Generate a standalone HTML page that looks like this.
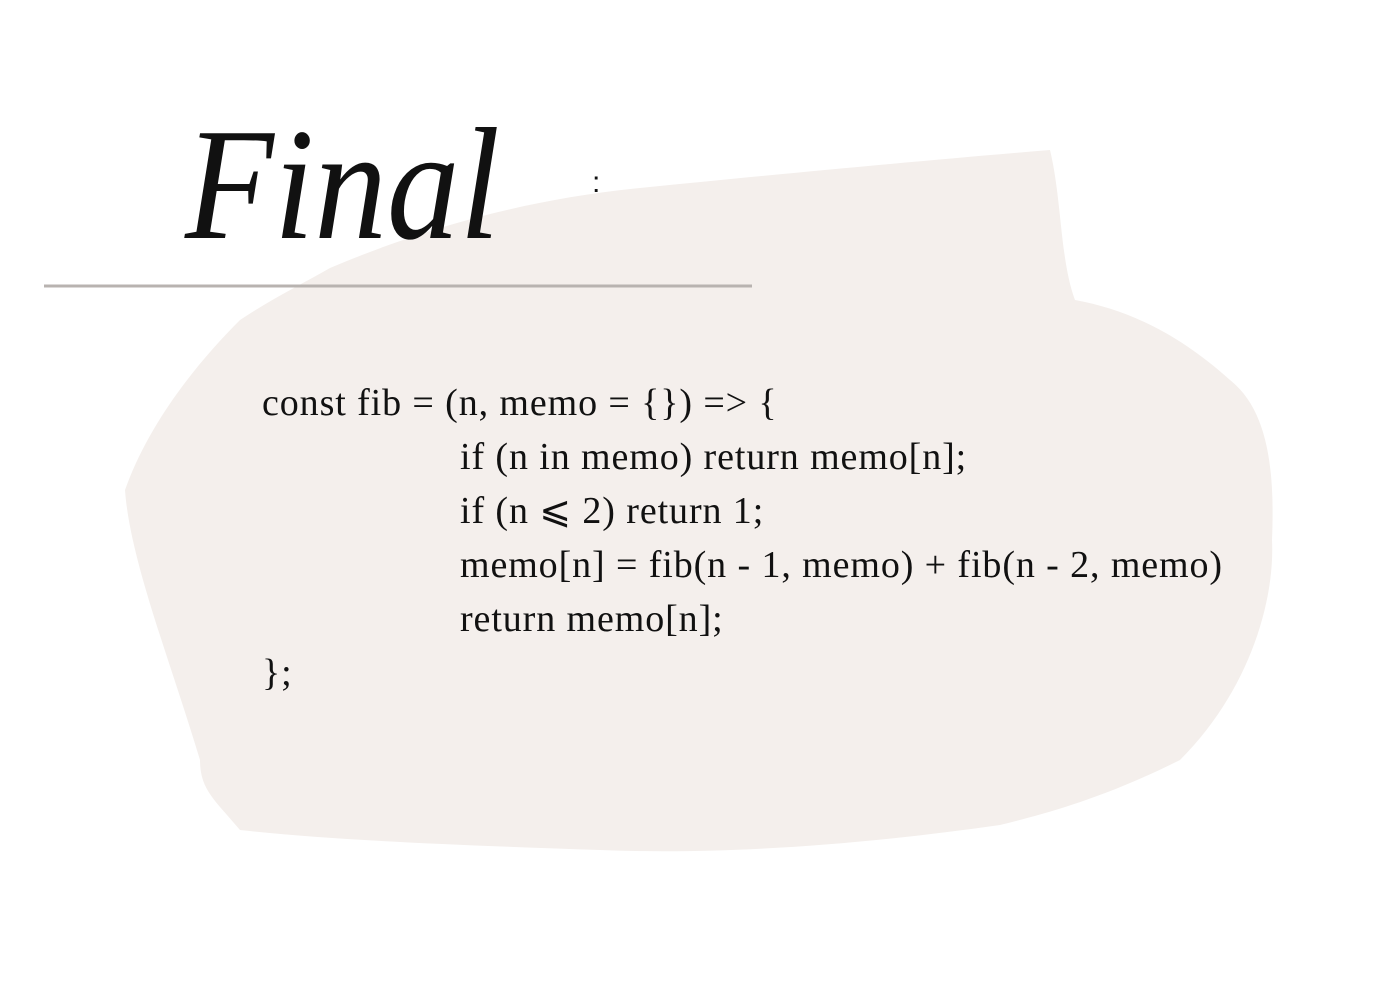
<!DOCTYPE html>
<html><head><meta charset="utf-8"><style>
html,body{margin:0;padding:0;background:#fff;}
body{width:1400px;height:1000px;position:relative;overflow:hidden;}
.code{position:absolute;font-family:"Liberation Serif",serif;font-size:38px;letter-spacing:0.9px;color:#111;white-space:pre;line-height:54px;}
</style></head><body>
<svg width="1400" height="1000" style="position:absolute;left:0;top:0">
<path d="M330,268 C420,230 520,200 640,188 C800,172 930,160 1050,150 C1062,200 1060,260 1075,300 C1130,310 1180,335 1230,380 C1268,410 1275,470 1272,540 C1275,600 1250,690 1180,760 C1100,800 1040,815 1000,825 C860,845 720,855 600,850 C450,845 330,840 240,830 C215,800 200,790 200,760 C170,660 130,560 125,490 C150,420 200,360 240,320 C270,300 300,285 330,268 Z" fill="#f4efec"/>
<line x1="44" y1="286" x2="752" y2="286" stroke="#b8b3b0" stroke-width="3"/>
<text x="185" y="238" font-family="Liberation Serif, serif" font-style="italic" font-size="160" fill="#111" textLength="315" lengthAdjust="spacingAndGlyphs">Final</text>
<text x="592" y="192" font-family="Liberation Sans, sans-serif" font-size="30" fill="#111">:</text>
</svg>
<div class="code" style="left:262px;top:376px">const fib = (n, memo = {}) =&gt; {</div>
<div class="code" style="left:460px;top:430px">if (n in memo) return memo[n];
if (n ⩽ 2) return 1;
memo[n] = fib(n - 1, memo) + fib(n - 2, memo)
return memo[n];</div>
<div class="code" style="left:262px;top:646px">};</div>
</body></html>
